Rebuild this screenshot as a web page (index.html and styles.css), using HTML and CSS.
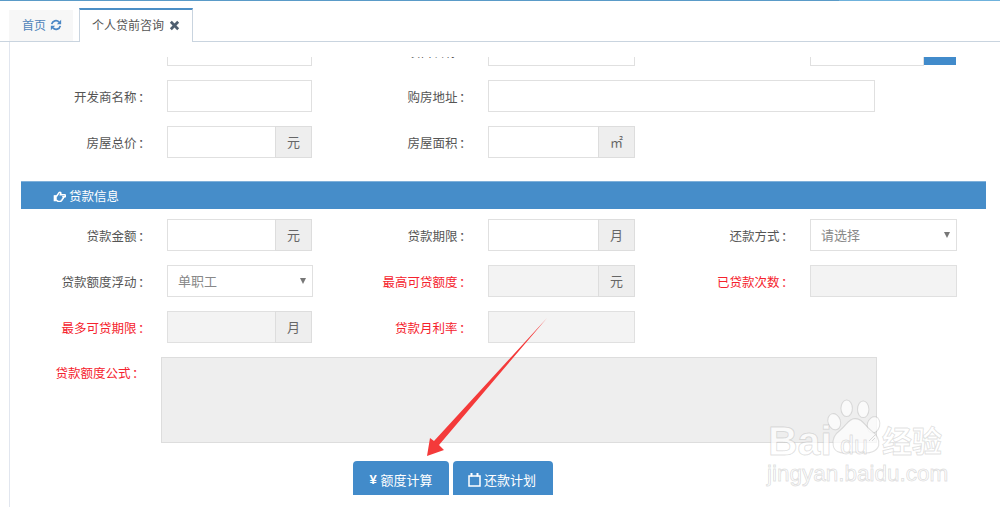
FILE: index.html
```html
<!DOCTYPE html>
<html lang="zh-CN">
<head>
<meta charset="utf-8">
<title>个人贷前咨询</title>
<link rel="stylesheet" href="styles.css">
</head>
<body>
<div class="topline"></div>
<nav class="tabs">
  <div class="tab tab-home">首页
    <svg class="ico-refresh" viewBox="0 0 14 14"><path d="M2 6a5 5 0 0 1 8.600-2.400M12 8a5 5 0 0 1-8.600 2.400" fill="none" stroke="#4a86c5" stroke-width="2"/><path d="M13 1v5H8zM1 13V8h5z" fill="#4a86c5"/></svg>
  </div>
  <div class="tab tab-active">个人贷前咨询
    <svg class="ico-close" viewBox="0 0 12 12"><path d="M2 2l8 8M10 2l-8 8" fill="none" stroke="#4f5f70" stroke-width="3"/></svg>
  </div>
</nav>
<main class="panel">
  <div class="row row-clipped">
    <div class="cell"><span class="label"></span><div class="box"></div></div>
    <div class="cell"><span class="label">项目名称<i>：</i></span><div class="box"></div></div>
    <div class="cell"><span class="label"></span><div class="box short"></div><div class="cut-btn"></div></div>
  </div>
  <div class="row">
    <div class="cell"><span class="label">开发商名称<i>：</i></span><div class="box"></div></div>
    <div class="cell"><span class="label">购房地址<i>：</i></span><div class="box wide"></div></div>
  </div>
  <div class="row">
    <div class="cell"><span class="label">房屋总价<i>：</i></span><div class="box group"><b></b><em>元</em></div></div>
    <div class="cell"><span class="label">房屋面积<i>：</i></span><div class="box group"><b></b><em>㎡</em></div></div>
  </div>
  <h2 class="section">
    <svg class="ico-hand" viewBox="0 0 14 12"><path d="M1.500 5.500h2.500L6.500 1.800c1-.9 2.200-.2 1.900 1L8 4h4.500c1.400 0 1.400 2.400 0 2.400H11c.4 1 .1 2-.7 2.300 0 .9-.5 1.400-1.200 1.500-.2.800-.8 1.200-1.500 1.200H5.500L4 10.300H1.500z" fill="none" stroke="#fff" stroke-width="1.700"/><path d="M1 5h3v5.500H1z" fill="#fff"/></svg>
    贷款信息
  </h2>
  <div class="row">
    <div class="cell"><span class="label">贷款金额<i>：</i></span><div class="box group"><b></b><em>元</em></div></div>
    <div class="cell"><span class="label">贷款期限<i>：</i></span><div class="box group"><b></b><em>月</em></div></div>
    <div class="cell"><span class="label">还款方式<i>：</i></span><div class="box select">请选择</div></div>
  </div>
  <div class="row">
    <div class="cell"><span class="label">贷款额度浮动<i>：</i></span><div class="box select">单职工</div></div>
    <div class="cell"><span class="label red">最高可贷额度<i>：</i></span><div class="box group off"><b></b><em>元</em></div></div>
    <div class="cell"><span class="label red">已贷款次数<i>：</i></span><div class="box off"></div></div>
  </div>
  <div class="row">
    <div class="cell"><span class="label red">最多可贷期限<i>：</i></span><div class="box group off"><b></b><em>月</em></div></div>
    <div class="cell"><span class="label red">贷款月利率<i>：</i></span><div class="box off"></div></div>
  </div>
  <div class="formula">
    <span class="formula-label red">贷款额度公式<i>：</i></span>
    <div class="formula-box"><svg class="grip" viewBox="0 0 8 8"><path d="M1 7l6-6M4 7l3-3" stroke="#777" stroke-width="1"/></svg></div>
  </div>
  <div class="actions">
    <button class="btn btn-calc"><span class="yen">¥</span>额度计算</button>
    <button class="btn btn-plan">
      <svg class="ico-cal" viewBox="0 0 13 15"><path d="M1 4h11v10H1z" fill="none" stroke="#fff" stroke-width="1.500"/><path d="M2.500 1h2v3.500h-2zM8.500 1h2v3.500h-2z" fill="#fff"/></svg>
      还款计划
    </button>
  </div>
</main>

<svg class="arrow" viewBox="0 0 1000 507"><polygon points="547,318 439,445 444,450 427,456 430,438 434,441" fill="#f43a3a"/></svg>

<div class="watermark">
  <svg class="paw" viewBox="0 0 60 60">
    <g fill="rgba(255,255,255,.72)" stroke="rgba(120,120,120,.22)" stroke-width="1">
      <ellipse cx="8" cy="22" rx="6" ry="8" transform="rotate(-18 8 22)"/>
      <ellipse cx="20" cy="9" rx="5.500" ry="8"/>
      <ellipse cx="36" cy="10" rx="5.500" ry="8"/>
      <ellipse cx="46" cy="25" rx="6" ry="8" transform="rotate(15 46 25)"/>
      <path d="M28 19c-6 0-8 6-14 11-7 5-8 10-7 15 1 6 7 8 13 7 5-1 11-1 16 0 6 1 13-1 15-7 1-6-2-11-8-15-6-5-8-11-15-11z"/>
    </g>
  </svg>
  <span class="wm-bai">Bai</span><span class="wm-du">du</span><span class="wm-jy">经验</span>
  <span class="wm-url">jingyan.baidu.com</span>
</div>
</body>
</html>
```

FILE: styles.css
```css
* { box-sizing: border-box; }
html, body { margin: 0; height: 507px; overflow: hidden; }
body {
  position: relative;
  background: #fff;
  color: #555;
  font: 12px/32px "Noto Sans CJK SC", "Liberation Sans", sans-serif;
}
i { font-family: "Noto Sans CJK JP", sans-serif; font-style: normal; margin: 0 -1.500px 0 1.500px; }
.red { color: #f5222d; }

.topline { height: 1px; background: linear-gradient(to right, #5a9bc8 839px, #6fb2dc 839px); }

.tabs {
  display: flex;
  align-items: flex-end;
  gap: 6px;
  height: 41px;
  padding-left: 9px;
  border-bottom: 1px solid #c9d4df;
}
.tab { display: flex; align-items: center; line-height: 1; }
.tab-home {
  width: 64px;
  height: 31px;
  padding: 0 0 2px 13px;
  gap: 4px;
  background: #f7f7f7;
  color: #4f84ba;
}
.tab-active {
  width: 114px;
  height: 34px;
  margin-bottom: -1px;
  padding: 0 0 2px 12px;
  gap: 5px;
  background: #fff;
  color: #555;
  border: 1px solid #c9d4df;
  border-top: 2px solid #4c8fc6;
  border-bottom: 0;
}
.ico-refresh { width: 12px; height: 12px; }
.ico-close { width: 11px; height: 11px; }

.panel {
  height: 465px;
  padding: 15px 0 0 11px;
  margin-left: 9px;
  border-left: 1px solid #e1e6ef;
}
.row { display: flex; height: 32px; margin-bottom: 14px; }
.row-clipped { height: 9px; overflow: hidden; align-items: flex-end; }
.cell { display: flex; width: 322px; height: 32px; flex: none; }
.cell:first-child { width: 321px; }
.label {
  flex: none;
  width: 128px;
  margin-right: 18px;
  text-align: right;
  white-space: nowrap;
  font-size: 12.500px;
  line-height: 34px;
}
.row-clipped .label { line-height: 35px; }

.box {
  flex: none;
  width: 147px;
  height: 32px;
  border: 1px solid #e0e0e0;
  background: #fff;
}
.cell:first-child .box { width: 145px; }
.cell:first-child .select { width: 146px; }
.box.wide { width: 387px; }
.box.short { width: 114px; }
.cut-btn { flex: none; width: 32px; height: 31px; margin-bottom: 1px; background: #418bcb; align-self: flex-end; }

.group { display: flex; }
.group b { flex: 1; }
.group em {
  flex: none;
  width: 37px;
  margin: -1px -1px -1px 0;
  text-align: center;
  font-style: normal;
  font-size: 13px;
  background: #eee;
  border: 1px solid #ddd;
  color: #666;
  line-height: 30px;
}
.box.off { background: #f3f3f3; }

.select {
  position: relative;
  padding-left: 10px;
  color: #888;
  font-size: 13px;
  line-height: 30px;
}
.select::after {
  content: "";
  position: absolute;
  right: 6px;
  top: 12px;
  border-left: 3px solid transparent;
  border-right: 3px solid transparent;
  border-top: 6px solid #777;
}

.section {
  display: flex;
  align-items: center;
  gap: 3px;
  width: 965px;
  height: 28px;
  margin: 23px 0 10px;
  padding: 1px 0 0 32px;
  background: #468dc9;
  border-top: 1px solid #7fb0da;
  color: #fff;
  font-size: 12.500px;
  font-weight: 400;
}
.ico-hand { width: 13px; height: 11px; }

.formula { display: flex; height: 86px; margin-bottom: 18px; }
.formula-label {
  flex: none;
  width: 122px;
  margin-right: 18px;
  text-align: right;
  font-size: 12.500px;
  line-height: 32px;
}
.formula-box {
  position: relative;
  width: 716px;
  height: 86px;
  background: #eee;
  border: 1px solid #ddd;
}
.grip { position: absolute; right: 0; bottom: 0; width: 8px; height: 8px; }

.actions { display: flex; gap: 4px; padding-left: 332px; }
.btn {
  display: flex;
  align-items: center;
  justify-content: center;
  height: 34px;
  padding: 3px 0 0;
  border: 0;
  border-radius: 4px 4px 0 0;
  background: #428bca;
  color: #fff;
  font: 13px "Noto Sans CJK SC", sans-serif;
}
.btn-calc { width: 96px; gap: 4px; }
.btn-plan { width: 100px; gap: 3px; padding-right: 2px; }
.yen { font-family: "Liberation Sans", sans-serif; font-weight: 700; font-size: 13px; }
.ico-cal { width: 13px; height: 15px; }

.arrow { position: absolute; left: 0; top: 0; width: 1000px; height: 507px; pointer-events: none; }

.watermark { position: absolute; left: 760px; top: 395px; width: 240px; height: 100px; line-height: 1; }
.paw { position: absolute; left: 66px; top: 4px; width: 62px; height: 62px; }
.watermark span {
  position: absolute;
  color: rgba(255,255,255,.75);
  -webkit-text-stroke: 1px rgba(120,120,120,.22);
  font-family: "Liberation Sans", sans-serif;
  font-weight: 700;
  white-space: nowrap;
}
.wm-bai { left: 8px; top: 26px; font-size: 41px; }
.wm-du { left: 80px; top: 38px; font-size: 25px; font-weight: 400 !important; }
.wm-jy { left: 122px; top: 29px; font-size: 30px; font-family: "Noto Sans CJK SC", sans-serif !important; }
.wm-url { left: 7px; top: 68px; font-size: 22.500px; font-weight: 400 !important; }
```
